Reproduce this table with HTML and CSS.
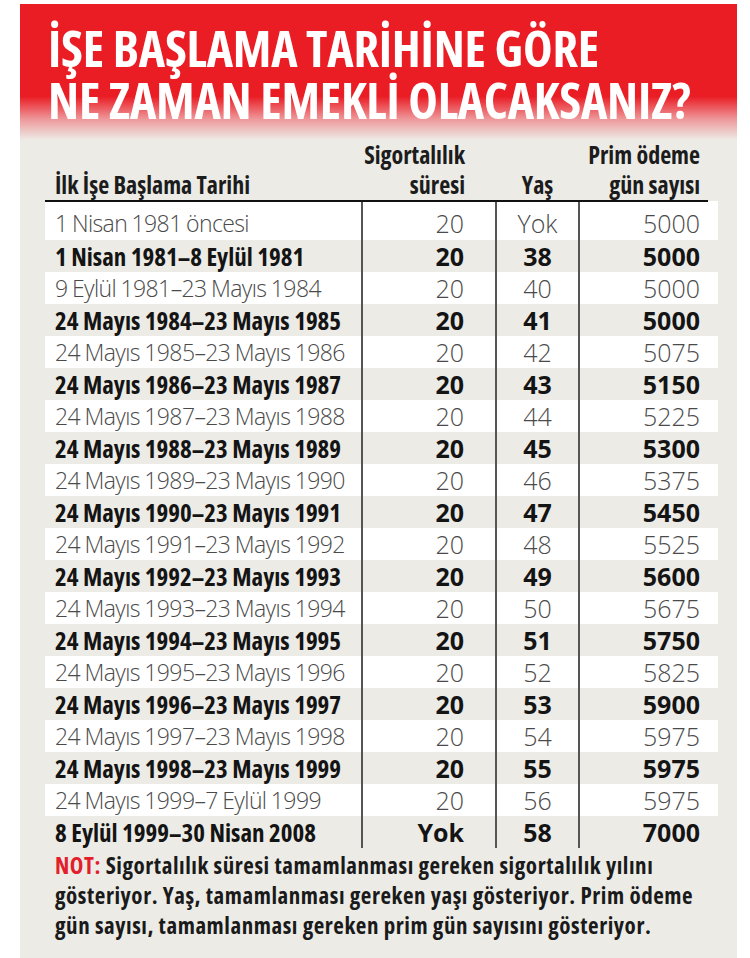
FILE: index.html
```html
<!DOCTYPE html>
<html lang="tr">
<head>
<meta charset="utf-8">
<title>İşe başlama tarihine göre emeklilik</title>
<link rel="stylesheet" href="styles.css">
</head>
<body>
<div class="card">
  <header class="banner">
    <h1 class="banner-title">İŞE BAŞLAMA TARİHİNE GÖRE<br>NE ZAMAN EMEKLİ OLACAKSANIZ?</h1>
  </header>
  <table class="grid">
    <colgroup>
      <col class="c1"><col class="c2"><col class="c3"><col class="c4">
    </colgroup>
    <thead>
      <tr>
        <th class="h-date">İlk İşe Başlama Tarihi</th>
        <th class="h-num">Sigortalılık<br>süresi</th>
        <th class="h-age">Yaş</th>
        <th class="h-prim">Prim ödeme<br>gün sayısı</th>
      </tr>
    </thead>
    <tbody>
      <tr class="light first"><td>1 Nisan 1981 öncesi</td><td>20</td><td>Yok</td><td>5000</td></tr>
      <tr class="bold"><td>1 Nisan 1981–8 Eylül 1981</td><td>20</td><td>38</td><td>5000</td></tr>
      <tr class="light"><td>9 Eylül 1981–23 Mayıs 1984</td><td>20</td><td>40</td><td>5000</td></tr>
      <tr class="bold"><td>24 Mayıs 1984–23 Mayıs 1985</td><td>20</td><td>41</td><td>5000</td></tr>
      <tr class="light"><td>24 Mayıs 1985–23 Mayıs 1986</td><td>20</td><td>42</td><td>5075</td></tr>
      <tr class="bold"><td>24 Mayıs 1986–23 Mayıs 1987</td><td>20</td><td>43</td><td>5150</td></tr>
      <tr class="light"><td>24 Mayıs 1987–23 Mayıs 1988</td><td>20</td><td>44</td><td>5225</td></tr>
      <tr class="bold"><td>24 Mayıs 1988–23 Mayıs 1989</td><td>20</td><td>45</td><td>5300</td></tr>
      <tr class="light"><td>24 Mayıs 1989–23 Mayıs 1990</td><td>20</td><td>46</td><td>5375</td></tr>
      <tr class="bold"><td>24 Mayıs 1990–23 Mayıs 1991</td><td>20</td><td>47</td><td>5450</td></tr>
      <tr class="light"><td>24 Mayıs 1991–23 Mayıs 1992</td><td>20</td><td>48</td><td>5525</td></tr>
      <tr class="bold"><td>24 Mayıs 1992–23 Mayıs 1993</td><td>20</td><td>49</td><td>5600</td></tr>
      <tr class="light"><td>24 Mayıs 1993–23 Mayıs 1994</td><td>20</td><td>50</td><td>5675</td></tr>
      <tr class="bold"><td>24 Mayıs 1994–23 Mayıs 1995</td><td>20</td><td>51</td><td>5750</td></tr>
      <tr class="light"><td>24 Mayıs 1995–23 Mayıs 1996</td><td>20</td><td>52</td><td>5825</td></tr>
      <tr class="bold"><td>24 Mayıs 1996–23 Mayıs 1997</td><td>20</td><td>53</td><td>5900</td></tr>
      <tr class="light"><td>24 Mayıs 1997–23 Mayıs 1998</td><td>20</td><td>54</td><td>5975</td></tr>
      <tr class="bold"><td>24 Mayıs 1998–23 Mayıs 1999</td><td>20</td><td>55</td><td>5975</td></tr>
      <tr class="light"><td>24 Mayıs 1999–7 Eylül 1999</td><td>20</td><td>56</td><td>5975</td></tr>
      <tr class="bold last"><td>8 Eylül 1999–30 Nisan 2008</td><td>Yok</td><td>58</td><td>7000</td></tr>
    </tbody>
  </table>
  <p class="note"><span class="note-label">NOT:</span> Sigortalılık süresi tamamlanması gereken sigortalılık yılını<br>gösteriyor. Yaş, tamamlanması gereken yaşı gösteriyor. Prim ödeme<br>gün sayısı, tamamlanması gereken prim gün sayısını gösteriyor.</p>
</div>
</body>
</html>
```

FILE: styles.css
```css
html, body {
  margin: 0;
  padding: 0;
  background: #ffffff;
}

body {
  font-family: "Open Sans", "Noto Sans", sans-serif;
  font-stretch: 75%;
}

.card {
  margin: 4px 0 0 20px;
  width: 717px;
  min-height: 954px;
  background: #ecebe6;
  box-sizing: border-box;
}

.banner {
  height: 136px;
  box-sizing: border-box;
  padding: 18px 0 0 28px;
  background: linear-gradient(to bottom, #ea1d25 0, #ea1d25 68%, #ee9a9c 85%, #ecebe6 100%);
}

.banner-title {
  margin: 0;
  color: #ffffff;
  font-size: 50px;
  line-height: 52px;
  font-weight: 700;
  font-stretch: 75%;
  letter-spacing: -0.2px;
}

.grid {
  margin-left: 25px;
  width: 663px;
  border-collapse: collapse;
  table-layout: fixed;
}

.c1 { width: 317px; }
.c2 { width: 134px; }
.c3 { width: 83px; }
.c4 { width: 129px; }

.grid th {
  font-weight: 700;
  font-size: 24px;
  font-stretch: 75%;
  line-height: 30px;
  color: #1c1c1c;
  vertical-align: bottom;
  padding: 0;
  border-bottom: 2px solid #111;
}

.h-date { text-align: left; padding-left: 10px !important; }
.h-num { text-align: right; padding-right: 31px !important; }
.h-age { text-align: center; }
.h-prim { text-align: right; padding-right: 8px !important; }

.grid td {
  font-size: 25px;
  height: 32px;
  line-height: 32px;
  padding: 0;
  white-space: nowrap;
}

.grid tr.first td {
  height: 34px;
  padding-top: 4px;
}

.grid td:nth-child(1) { padding-left: 10px; text-align: left; }
.grid td:nth-child(2) { text-align: right; padding-right: 31px; border-left: 2px solid #555; }
.grid td:nth-child(3) { text-align: center; border-left: 2px solid #555; }
.grid td:nth-child(4) { text-align: right; padding-right: 8px; border-left: 2px solid #555; }

.light td {
  background: #ffffff;
  font-weight: 300;
  color: #4a4a4a;
}

.light td:first-child {
  font-size: 23px;
  font-stretch: 100%;
  letter-spacing: -0.6px;
  word-spacing: -1px;
}

.light td:last-child {
  box-shadow: 10px 0 0 #ffffff;
}

.bold td {
  font-weight: 700;
  color: #141414;
}

.bold td:first-child {
  font-stretch: 75%;
}

.grid td:nth-child(n+2) {
  font-stretch: 100%;
}

.note {
  margin: 2px 0 0 35px;
  font-size: 23px;
  line-height: 30px;
  font-weight: 700;
  font-stretch: 75%;
  letter-spacing: 0.55px;
  color: #1a1a1a;
}

.note-label {
  color: #e3202a;
}
```
